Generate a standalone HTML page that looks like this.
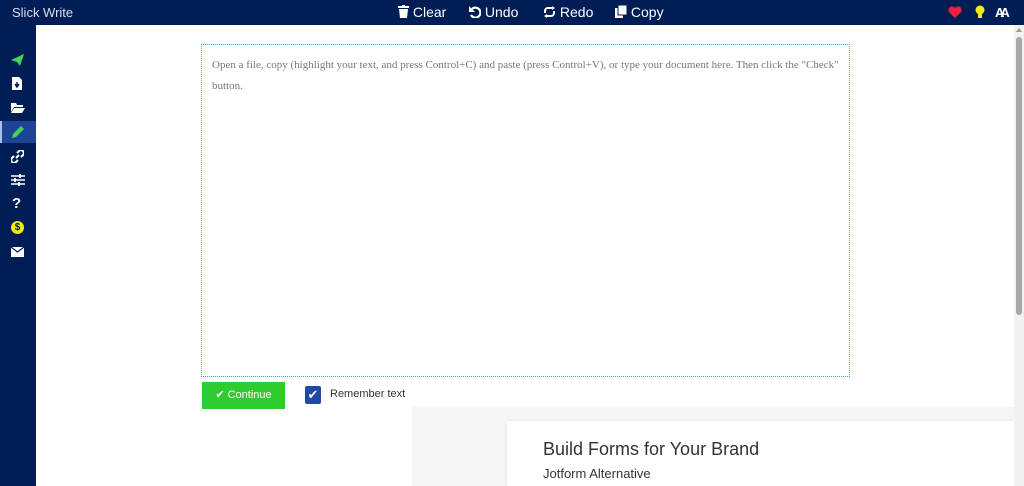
<!DOCTYPE html>
<html><head><style>
*{margin:0;padding:0;box-sizing:border-box}
body{width:1024px;height:486px;overflow:hidden;background:#fff;font-family:"Liberation Sans",sans-serif;position:relative}
#top{position:absolute;left:0;top:0;width:1024px;height:25px;background:#001d55;color:#fff}
#side{position:absolute;left:0;top:25px;width:36px;height:461px;background:#001d55}
.t{position:absolute;top:4px;font-size:14px;color:#fff}
.ic{position:absolute;left:11px}
</style></head><body>
<div id="top">
<div class="t" style="left:12px;font-size:13px;top:5px;color:#dde">Slick Write</div>
<div class="t" style="left:398px"><svg width="11" height="13" style="vertical-align:-1px"><rect x="0" y="1" width="11" height="2" fill="#fff"/><rect x="4" y="0" width="3" height="2" fill="#fff"/><path d="M1 4h9l-1 9H2z" fill="#fff"/></svg> Clear</div>
<div class="t" style="left:469px"><svg width="12" height="12" style="vertical-align:-1px"><path d="M3 3A5 5 0 1 1 2 9" stroke="#fff" stroke-width="2.2" fill="none"/><path d="M0 0v6h6z" fill="#fff"/></svg> Undo</div>
<div class="t" style="left:543px"><svg width="13" height="12" style="vertical-align:-1px"><path d="M2 7V5a3 3 0 0 1 3-3h5M11 5v2a3 3 0 0 1-3 3H3" stroke="#fff" stroke-width="2" fill="none"/><path d="M9 0l3 2-3 2zM4 8l-3 2 3 2z" fill="#fff"/></svg> Redo</div>
<div class="t" style="left:615px"><svg width="12" height="13" style="vertical-align:-1px"><rect x="0" y="3" width="8" height="10" fill="#fff"/><rect x="3" y="0" width="9" height="10" fill="#fff" stroke="#001d55" stroke-width="1"/></svg> Copy</div>
<svg style="position:absolute;left:948px;top:6px" width="14" height="12"><path d="M7 12L1 6A3.3 3.3 0 0 1 7 2a3.3 3.3 0 0 1 6 4z" fill="#f0203c"/></svg>
<svg style="position:absolute;left:975px;top:5px" width="10" height="14"><circle cx="5" cy="5" r="4.5" fill="#f5ea16"/><rect x="3" y="9" width="4" height="4" fill="#f5ea16"/></svg>
<div style="position:absolute;left:995px;top:5px;font-weight:bold;font-size:13px;color:#fff;letter-spacing:-4px">AA</div>
</div>
<div id="side">
<div style="position:absolute;left:0;top:96px;width:36px;height:22px;background:#1d4496"></div>
<div style="position:absolute;left:0;top:96px;width:2px;height:22px;background:#a8c0f0"></div>
<svg class="ic" style="top:29px" width="13" height="12"><path d="M0 6L13 0 9 12 6 8z" fill="#3fd45a"/></svg>
<svg class="ic" style="top:52px;left:12px" width="10" height="13"><path d="M0 0h7l3 3v10H0z" fill="#fff"/><path d="M5 5v4M3 7l2 3 2-3" stroke="#001d55" stroke-width="1.5" fill="none"/></svg>
<svg class="ic" style="top:78px" width="14" height="10"><path d="M0 0h5l1 2h6v2H3L0 9z" fill="#fff"/><path d="M3 5h11l-3 5H0z" fill="#fff"/></svg>
<svg class="ic" style="top:100px;left:12px" width="13" height="13"><path d="M0 13l1-4 8-8 3 3-8 8z" fill="#3fd45a"/></svg>
<svg class="ic" style="top:125px" width="13" height="13"><path d="M5 8l3-3M6 3l2-2a2.5 2.5 0 0 1 4 4l-2 2M7 10l-2 2a2.5 2.5 0 0 1-4-4l2-2" stroke="#fff" stroke-width="2" fill="none"/></svg>
<svg class="ic" style="top:149px" width="14" height="12"><path d="M0 2h14M0 6h14M0 10h14" stroke="#fff" stroke-width="1.6"/><path d="M9 0v4M4 4v4M8 8v4" stroke="#fff" stroke-width="2"/></svg>
<div style="position:absolute;left:12px;top:170px;color:#fff;font-weight:bold;font-size:15px">?</div>
<div style="position:absolute;left:11px;top:196px;width:13px;height:13px;border-radius:50%;background:#f5ea16;color:#001d55;font-size:10px;font-weight:bold;text-align:center;line-height:13px">$</div>
<svg class="ic" style="top:222px" width="13" height="10"><rect width="13" height="10" fill="#fff"/><path d="M0 0l6.5 5L13 0" stroke="#001d55" stroke-width="1.2" fill="none"/></svg>
</div>
<div style="position:absolute;left:201px;top:44px;width:649px;height:333px;border:1px dotted #4a9be6;font-family:'Liberation Serif',serif;font-size:11px;color:#777;padding:10px 10px;line-height:21px">Open a file, copy (highlight your text, and press Control+C) and paste (press Control+V), or type your document here. Then click the "Check" button.</div>
<div style="position:absolute;left:202px;top:382px;width:83px;height:27px;background:#2ecc2e;color:#fff;font-size:11px;line-height:27px;text-align:center">&#10004; Continue</div>
<div style="position:absolute;left:305px;top:386px;width:16px;height:18px;background:#1c4aa6;border-radius:2px;color:#fff;font-size:13px;text-align:center;line-height:18px">&#10004;</div>
<div style="position:absolute;left:330px;top:388px;font-size:11px;color:#333">Remember text</div>
<div style="position:absolute;left:412px;top:407px;width:602px;height:79px;background:#f6f6f6"></div>
<div style="position:absolute;left:507px;top:421px;width:507px;height:65px;background:#fff;box-shadow:0 0 3px #ddd"></div>
<div style="position:absolute;left:543px;top:439px;font-size:18px;color:#333">Build Forms for Your Brand</div>
<div style="position:absolute;left:543px;top:466px;font-size:13px;color:#333">Jotform Alternative</div>
<div style="position:absolute;left:1014px;top:25px;width:10px;height:461px;background:#f1f1f1"></div>
<div style="position:absolute;left:1016px;top:37px;width:6px;height:278px;background:#a8a8a8;border-radius:3px"></div>
<div style="position:absolute;left:1016px;top:28px;width:0;height:0;border-left:3px solid transparent;border-right:3px solid transparent;border-bottom:4px solid #999"></div>
</body></html>
